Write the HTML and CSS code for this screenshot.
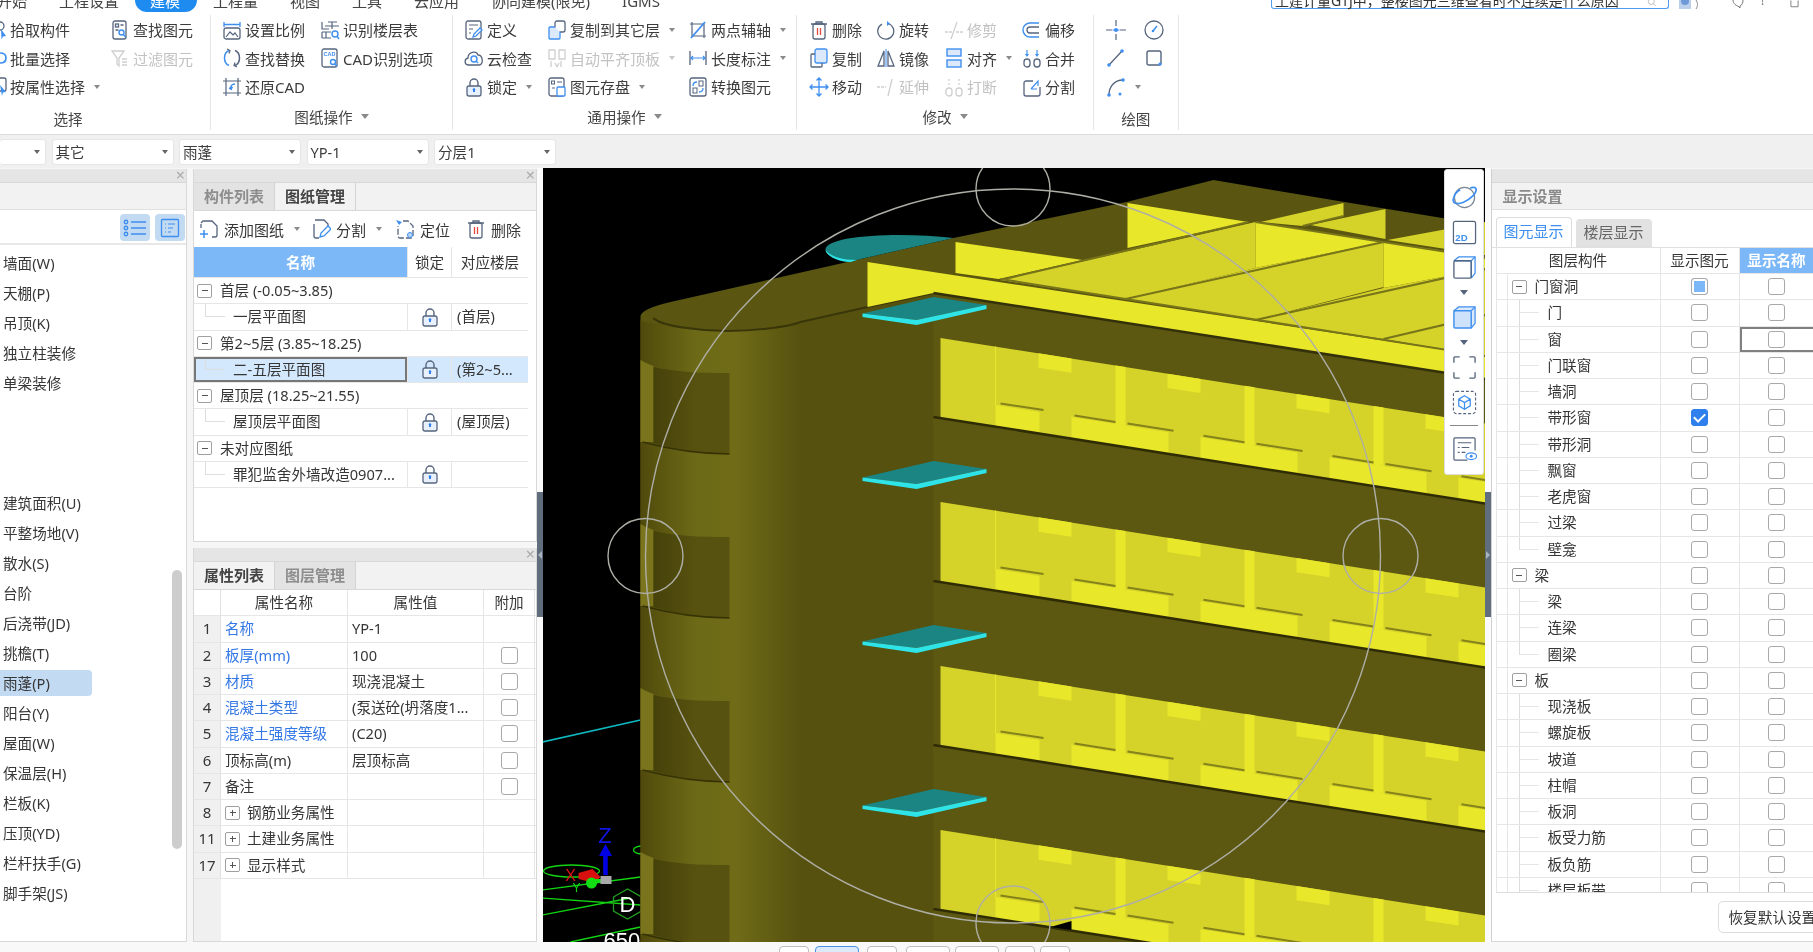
FILE: index.html
```html
<!DOCTYPE html>
<html lang="zh-CN">
<head>
<meta charset="utf-8">
<title>建模</title>
<link rel="stylesheet" href="styles.css">
</head>
<body>
<svg class="sprites" width="0" height="0" aria-hidden="true">
<defs>
<symbol id="i-pick" viewBox="0 0 20 20"><circle cx="13" cy="6" r="4" fill="none" stroke="#56657e" stroke-width="1.3"/><path d="M14 9l5 7-3 .5-1.500 3z" fill="#3f8fef"/></symbol>
<symbol id="i-find" viewBox="0 0 20 20"><g fill="none" stroke="#56657e" stroke-width="1.3"><rect x="3" y="1" width="13" height="18" rx="2"/><rect x="5.500" y="4" width="3" height="3"/><path d="M10.500 5h3M5.500 10h3"/></g><circle cx="11.500" cy="12.500" r="2.500" fill="none" stroke="#3f8fef" stroke-width="1.400"/><path d="M13.500 14.500l2 2.500" stroke="#3f8fef" stroke-width="1.400"/></symbol>
<symbol id="i-batch" viewBox="0 0 20 20"><path d="M13 5c4 0 6 2 6 5s-2 5-6 5" fill="none" stroke="#3f8fef" stroke-width="1.700"/></symbol>
<symbol id="i-filter" viewBox="0 0 20 20"><path d="M2 3h12l-5 7v8l-2-2v-6z" fill="none" stroke="#cfcfcf" stroke-width="1.300"/><path d="M12 11h5M12 14h5M12 17h5" stroke="#cfcfcf" stroke-width="1.300"/></symbol>
<symbol id="i-prop" viewBox="0 0 20 20"><rect x="8" y="1" width="11" height="13" rx="2" fill="none" stroke="#56657e" stroke-width="1.300"/><path d="M13 8l6 7-3 .5L15 19z" fill="#3f8fef"/></symbol>
<symbol id="i-scale" viewBox="0 0 20 20"><path d="M2 2v5M18 2v5M2 4.500h16" stroke="#3f8fef" stroke-width="1.300" fill="none"/><rect x="2" y="8" width="16" height="11" rx="2" fill="none" stroke="#56657e" stroke-width="1.300"/><path d="M4 17l4-5 3 3 2-2 3 4" fill="none" stroke="#56657e" stroke-width="1.200"/></symbol>
<symbol id="i-floor" viewBox="0 0 20 20"><path d="M2 2v7h7M5 6h14M12 2v7M17 2h-9" fill="none" stroke="#56657e" stroke-width="1.200"/><path d="M2 12h9M2 18h9M6 12v6M2 12v6" fill="none" stroke="#56657e" stroke-width="1.200"/><circle cx="15" cy="14" r="3" fill="none" stroke="#3f8fef" stroke-width="1.400"/><path d="M17 16l2 3" stroke="#3f8fef" stroke-width="1.400"/></symbol>
<symbol id="i-replace" viewBox="0 0 20 20"><path d="M7 2.500C1 5 1 15 7 17.500" fill="none" stroke="#3f8fef" stroke-width="1.500"/><path d="M13 2.500c6 2.500 6 12.500 0 15" fill="none" stroke="#56657e" stroke-width="1.500"/><path d="M5 1l3 1.500-1 3M15 19l-3-1.500 1-3" fill="none" stroke="#56657e" stroke-width="1.200"/></symbol>
<symbol id="i-cad" viewBox="0 0 20 20"><rect x="2" y="1" width="15" height="18" rx="2" fill="none" stroke="#56657e" stroke-width="1.300"/><rect x="4" y="3" width="11" height="6" fill="#fff"/><text x="9.500" y="8" font-size="5.500" font-family="Liberation Sans" font-weight="700" text-anchor="middle" fill="#3f8fef">CAD</text><circle cx="13" cy="14" r="2.500" fill="#fff" stroke="#3f8fef" stroke-width="1.400"/><path d="M15 16l2 2.500" stroke="#3f8fef" stroke-width="1.400"/></symbol>
<symbol id="i-restore" viewBox="0 0 20 20"><path d="M1 4h18M1 16h18M4 1v18M16 1v18" stroke="#56657e" stroke-width="1.200" fill="none"/><path d="M13 7c-3 0-5 2-4 5l-2-1M9 12l1.500-2" fill="none" stroke="#3f8fef" stroke-width="1.500"/></symbol>
<symbol id="i-define" viewBox="0 0 20 20"><rect x="2" y="1" width="15" height="18" rx="2" fill="none" stroke="#56657e" stroke-width="1.300"/><path d="M5 5h9M5 9h4M5 13h2" stroke="#56657e" stroke-width="1.200"/><path d="M9 17l1-3 6-6 2 2-6 6z" fill="#fff" stroke="#3f8fef" stroke-width="1.300"/></symbol>
<symbol id="i-cloud" viewBox="0 0 20 20"><path d="M5 17c-5 0-5-6-1-7 0-6 8-8 10-3 5 0 6 10 1 10z" fill="none" stroke="#56657e" stroke-width="1.300"/><circle cx="10" cy="11" r="3" fill="none" stroke="#3f8fef" stroke-width="1.400"/><path d="M12 13l2 2" stroke="#3f8fef" stroke-width="1.400"/></symbol>
<symbol id="i-lock" viewBox="0 0 20 20"><path d="M6 9V6a4 4 0 0 1 8 0v3" fill="none" stroke="#56657e" stroke-width="1.400"/><rect x="3" y="9" width="14" height="10" rx="2" fill="#e8f0fb" stroke="#56657e" stroke-width="1.300"/><rect x="9" y="12" width="2" height="3" fill="#2f80ed"/><circle cx="10" cy="12.500" r="1.300" fill="#2f80ed"/></symbol>
<symbol id="i-copyf" viewBox="0 0 20 20"><rect x="8" y="1" width="10" height="11" rx="2" fill="#fff" stroke="#56657e" stroke-width="1.300"/><path d="M8 7H3a1 1 0 0 0-1 1v10a1 1 0 0 0 1 1h9a1 1 0 0 0 1-1v-6" fill="#dce9fb" stroke="#3f8fef" stroke-width="1.300"/></symbol>
<symbol id="i-top" viewBox="0 0 20 20"><path d="M2 2h6v9H2zM12 2h6v9h-6zM4 13v6M14 13v6M10 19l-2-4M10 19l2-4" fill="none" stroke="#cfcfcf" stroke-width="1.300"/></symbol>
<symbol id="i-save" viewBox="0 0 20 20"><rect x="2" y="1" width="15" height="18" rx="2" fill="none" stroke="#56657e" stroke-width="1.300"/><rect x="4.500" y="4" width="3" height="3" fill="none" stroke="#56657e"/><path d="M10 5h5M5 11h3" stroke="#56657e"/><rect x="10" y="10" width="8" height="9" rx="1" fill="#fff" stroke="#3f8fef" stroke-width="1.300"/></symbol>
<symbol id="i-twopt" viewBox="0 0 20 20"><path d="M4 2v14h14M2 4h14v14" fill="none" stroke="#56657e" stroke-width="1.200"/><path d="M3 18L17 2" stroke="#3f8fef" stroke-width="1.800"/></symbol>
<symbol id="i-len" viewBox="0 0 20 20"><path d="M2 3v14M18 3v14" stroke="#56657e" stroke-width="1.300"/><path d="M3 10h14M5 8l-2 2 2 2M15 8l2 2-2 2" fill="none" stroke="#3f8fef" stroke-width="1.200"/></symbol>
<symbol id="i-conv" viewBox="0 0 20 20"><rect x="2" y="1" width="16" height="18" rx="2" fill="none" stroke="#56657e" stroke-width="1.300"/><rect x="11" y="4" width="4" height="5" fill="none" stroke="#56657e"/><rect x="5" y="11" width="4" height="5" fill="none" stroke="#56657e"/><path d="M5 9c0-3 1-4 4-4M15 11c0 3-1 4-4 4" fill="none" stroke="#3f8fef" stroke-width="1.300"/></symbol>
<symbol id="i-del" viewBox="0 0 20 20"><path d="M2 4h16M7 4V2h6v2" fill="none" stroke="#56657e" stroke-width="1.300"/><rect x="4" y="4" width="12" height="15" rx="2" fill="none" stroke="#56657e" stroke-width="1.300"/><path d="M8.500 8v7M11.500 8v7" stroke="#e04a3f" stroke-width="1.300"/></symbol>
<symbol id="i-rot" viewBox="0 0 20 20"><path d="M12 3.500a8 8 0 1 1-6 .6" fill="none" stroke="#56657e" stroke-width="1.300"/><path d="M11 1l3 2.500-3 2.500z" fill="#3f8fef"/></symbol>
<symbol id="i-trim" viewBox="0 0 20 20"><path d="M1 12h7M12 12h7" stroke="#cfcfcf" stroke-width="1.300" stroke-dasharray="3 1"/><path d="M7 19L13 2" stroke="#cfcfcf" stroke-width="1.300"/></symbol>
<symbol id="i-off" viewBox="0 0 20 20"><path d="M17 3H8a7 7 0 0 0 0 14h9" fill="none" stroke="#3f8fef" stroke-width="1.400"/><path d="M17 7H8a3 3 0 0 0 0 6h9" fill="none" stroke="#56657e" stroke-width="1.300"/></symbol>
<symbol id="i-copy" viewBox="0 0 20 20"><rect x="6" y="1" width="12" height="14" rx="2" fill="#dce9fb" stroke="#3f8fef" stroke-width="1.300"/><path d="M6 6H3a1 1 0 0 0-1 1v11a1 1 0 0 0 1 1h9a1 1 0 0 0 1-1v-3" fill="none" stroke="#56657e" stroke-width="1.300"/></symbol>
<symbol id="i-mir" viewBox="0 0 20 20"><path d="M8 3L2 18h6zM12 3l6 15h-6z" fill="none" stroke="#56657e" stroke-width="1.300"/><path d="M10 1v18" stroke="#3f8fef" stroke-width="1"/></symbol>
<symbol id="i-align" viewBox="0 0 20 20"><rect x="3" y="1" width="14" height="7" fill="#dce9fb" stroke="#3f8fef" stroke-width="1.400"/><rect x="3" y="12" width="14" height="7" fill="#dce9fb" stroke="#3f8fef" stroke-width="1.400"/></symbol>
<symbol id="i-merge" viewBox="0 0 20 20"><rect x="2" y="11" width="6" height="8" rx="3" fill="none" stroke="#56657e" stroke-width="1.300"/><rect x="12" y="11" width="6" height="8" rx="3" fill="none" stroke="#56657e" stroke-width="1.300"/><path d="M5 2v6M15 2v6M3.500 6L5 8l1.500-2M13.500 6L15 8l1.500-2" fill="none" stroke="#3f8fef" stroke-width="1.200"/></symbol>
<symbol id="i-move" viewBox="0 0 20 20"><path d="M10 1v18M1 10h18M7.500 3.500L10 1l2.500 2.500M7.500 16.500L10 19l2.500-2.500M3.500 7.500L1 10l2.500 2.500M16.500 7.500L19 10l-2.500 2.500" fill="none" stroke="#3f8fef" stroke-width="1.300"/></symbol>
<symbol id="i-ext" viewBox="0 0 20 20"><path d="M1 10h9" stroke="#cfcfcf" stroke-width="1.300" stroke-dasharray="3 1"/><path d="M12 19L16 2" stroke="#cfcfcf" stroke-width="1.300"/></symbol>
<symbol id="i-brk" viewBox="0 0 20 20"><rect x="2" y="11" width="6" height="8" rx="3" fill="none" stroke="#cfcfcf" stroke-width="1.300"/><rect x="12" y="11" width="6" height="8" rx="3" fill="none" stroke="#cfcfcf" stroke-width="1.300"/><path d="M5 2v2M5 6v2M15 2v2M15 6v2" stroke="#cfcfcf" stroke-width="1.300"/></symbol>
<symbol id="i-split" viewBox="0 0 20 20"><path d="M11 4H4a2 2 0 0 0-2 2v11a2 2 0 0 0 2 2h12a2 2 0 0 0 2-2v-7" fill="none" stroke="#56657e" stroke-width="1.300"/><path d="M9 12l7-8v5M9 12h6" fill="none" stroke="#3f8fef" stroke-width="1.200"/></symbol>
<symbol id="i-cross" viewBox="0 0 20 20"><path d="M10 0v6M10 14v6M0 10h6M14 10h6" stroke="#56657e" stroke-width="1.200"/><circle cx="10" cy="10" r="2" fill="#3f8fef"/><path d="M6.500 10h7" stroke="#3f8fef" stroke-width="1"/></symbol>
<symbol id="i-clock" viewBox="0 0 20 20"><circle cx="10" cy="10" r="9" fill="none" stroke="#56657e" stroke-width="1.300"/><path d="M9 11l4-5" stroke="#3f8fef" stroke-width="1.500"/><circle cx="9" cy="11" r="1.300" fill="#3f8fef"/></symbol>
<symbol id="i-line" viewBox="0 0 20 20"><path d="M3 17L16 3" stroke="#56657e" stroke-width="1.300"/><circle cx="3" cy="17" r="1.800" fill="#3f8fef"/><circle cx="16" cy="3" r="1.800" fill="#3f8fef"/></symbol>
<symbol id="i-sq" viewBox="0 0 20 20"><rect x="3" y="3" width="14" height="14" rx="2" fill="none" stroke="#56657e" stroke-width="1.400"/><circle cx="16" cy="16" r="1.600" fill="#3f8fef"/></symbol>
<symbol id="i-arc" viewBox="0 0 20 20"><path d="M3 18C3 10 8 3 17 3" fill="none" stroke="#56657e" stroke-width="1.300"/><circle cx="3" cy="18" r="1.800" fill="#3f8fef"/><circle cx="17" cy="3" r="1.800" fill="#3f8fef"/><circle cx="14" cy="17" r="1.500" fill="#3f8fef"/></symbol>
<symbol id="i-add" viewBox="0 0 20 20"><path d="M6 2h7l5 5v9a2 2 0 0 1-2 2h-3M2 9V5M6 2H4l-2 2" fill="none" stroke="#56657e" stroke-width="1.300"/><path d="M5 11v8M1 15h8" stroke="#3f8fef" stroke-width="1.500"/></symbol>
<symbol id="i-msplit" viewBox="0 0 20 20"><path d="M4 1h9l4 4v3M3 5v12a2 2 0 0 0 2 2h3" fill="none" stroke="#56657e" stroke-width="1.300"/><path d="M9 18l1-4 7-7 3 3-7 7z" fill="#fff" stroke="#3f8fef" stroke-width="1.300"/></symbol>
<symbol id="i-loc" viewBox="0 0 20 20"><path d="M8 2h5l5 5v10a2 2 0 0 1-2 2H5a2 2 0 0 1-2-2V7" fill="none" stroke="#56657e" stroke-width="1.300" stroke-dasharray="6 2"/><path d="M1 1l6 2-3 3z" fill="#3f8fef"/><circle cx="15" cy="16" r="2.500" fill="#bcd6f7" stroke="#3f8fef"/></symbol>
<symbol id="i-ls1" viewBox="0 0 24 20"><g fill="none" stroke="#3f8fef" stroke-width="1.400"><circle cx="3" cy="4" r="1.700"/><circle cx="3" cy="10" r="1.700"/><circle cx="3" cy="16" r="1.700"/><path d="M8 4h15M8 10h15M8 16h15"/></g></symbol>
<symbol id="i-ls2" viewBox="0 0 20 20"><rect x="1.500" y="1.500" width="17" height="17" rx="1" fill="none" stroke="#3f8fef" stroke-width="1.300"/><path d="M5 6h1M8 6h7M5 10h1M8 10h5M5 14h1M8 14h3" stroke="#3f8fef" stroke-width="1.200"/></symbol>
</defs>
</svg>

<div class="app">
  <header class="tabs">
    <span class="tab first">开始</span><span class="tab">工程设置</span><span class="tab active">建模</span><span class="tab">工程量</span><span class="tab">视图</span><span class="tab">工具</span><span class="tab">云应用</span><span class="tab">协同建模(限免)</span><span class="tab">IGMS</span>
    <div class="search"><span class="search-text">土建计量GTJ中，整楼图元三维查看时不连续是什么原因</span><svg class="search-ico" viewBox="0 0 12 12"><circle cx="5" cy="2" r="4" fill="none" stroke="#aaa"/><path d="M8 5l3 3" stroke="#aaa"/></svg></div>
    <svg class="avatar" viewBox="0 0 24 9"><rect x="0" y="0" width="12" height="9" fill="#b9cfec"/><circle cx="6" cy="1" r="4" fill="#6d9ad6"/><path d="M17 0c2 3 2 6 0 9" fill="none" stroke="#888"/></svg>
    <svg class="tray tray1" viewBox="0 0 14 9"><path d="M2 0c0 4 4 6 5 6l2 2V6c2-1 3-3 3-6" fill="none" stroke="#777"/></svg>
    <span class="tray-mark">!</span>
    <svg class="tray tray3" viewBox="0 0 10 9"><path d="M1 0v7h8V0" fill="none" stroke="#777"/></svg>
  </header>

  <nav class="ribbon">
    <section class="group g1">
      <div class="grid c1">
        <div class="it"><svg class="ic"><use href="#i-pick"/></svg>拾取构件</div>
        <div class="it"><svg class="ic"><use href="#i-batch"/></svg>批量选择</div>
        <div class="it"><svg class="ic"><use href="#i-prop"/></svg>按属性选择<i class="car"></i></div>
        <div class="it"><svg class="ic"><use href="#i-find"/></svg>查找图元</div>
        <div class="it off"><svg class="ic"><use href="#i-filter"/></svg>过滤图元</div>
      </div>
      <div class="glabel low">选择</div>
    </section>
    <section class="group g2">
      <div class="grid c2">
        <div class="it"><svg class="ic"><use href="#i-scale"/></svg>设置比例</div>
        <div class="it"><svg class="ic"><use href="#i-replace"/></svg>查找替换</div>
        <div class="it"><svg class="ic"><use href="#i-restore"/></svg>还原CAD</div>
        <div class="it"><svg class="ic"><use href="#i-floor"/></svg>识别楼层表</div>
        <div class="it"><svg class="ic"><use href="#i-cad"/></svg>CAD识别选项</div>
      </div>
      <div class="glabel">图纸操作<i class="car big"></i></div>
    </section>
    <section class="group g3">
      <div class="grid c3">
        <div class="it"><svg class="ic"><use href="#i-define"/></svg>定义</div>
        <div class="it"><svg class="ic"><use href="#i-cloud"/></svg>云检查</div>
        <div class="it"><svg class="ic"><use href="#i-lock"/></svg>锁定<i class="car"></i></div>
        <div class="it"><svg class="ic"><use href="#i-copyf"/></svg>复制到其它层<i class="car"></i></div>
        <div class="it off"><svg class="ic"><use href="#i-top"/></svg>自动平齐顶板<i class="car"></i></div>
        <div class="it"><svg class="ic"><use href="#i-save"/></svg>图元存盘<i class="car"></i></div>
        <div class="it"><svg class="ic"><use href="#i-twopt"/></svg>两点辅轴<i class="car"></i></div>
        <div class="it"><svg class="ic"><use href="#i-len"/></svg>长度标注<i class="car"></i></div>
        <div class="it"><svg class="ic"><use href="#i-conv"/></svg>转换图元</div>
      </div>
      <div class="glabel">通用操作<i class="car big"></i></div>
    </section>
    <section class="group g4">
      <div class="grid c4">
        <div class="it"><svg class="ic"><use href="#i-del"/></svg>删除</div>
        <div class="it"><svg class="ic"><use href="#i-copy"/></svg>复制</div>
        <div class="it"><svg class="ic"><use href="#i-move"/></svg>移动</div>
        <div class="it"><svg class="ic"><use href="#i-rot"/></svg>旋转</div>
        <div class="it"><svg class="ic"><use href="#i-mir"/></svg>镜像</div>
        <div class="it off"><svg class="ic"><use href="#i-ext"/></svg>延伸</div>
        <div class="it off"><svg class="ic"><use href="#i-trim"/></svg>修剪</div>
        <div class="it"><svg class="ic"><use href="#i-align"/></svg>对齐<i class="car"></i></div>
        <div class="it off"><svg class="ic"><use href="#i-brk"/></svg>打断</div>
        <div class="it"><svg class="ic"><use href="#i-off"/></svg>偏移</div>
        <div class="it"><svg class="ic"><use href="#i-merge"/></svg>合并</div>
        <div class="it"><svg class="ic"><use href="#i-split"/></svg>分割</div>
      </div>
      <div class="glabel">修改<i class="car big"></i></div>
    </section>
    <section class="group g5">
      <div class="grid c5">
        <div class="it"><svg class="ic"><use href="#i-cross"/></svg></div>
        <div class="it"><svg class="ic"><use href="#i-line"/></svg></div>
        <div class="it"><svg class="ic"><use href="#i-arc"/></svg><i class="car"></i></div>
        <div class="it"><svg class="ic"><use href="#i-clock"/></svg></div>
        <div class="it"><svg class="ic"><use href="#i-sq"/></svg></div>
      </div>
      <div class="glabel low">绘图</div>
    </section>
  </nav>

  <div class="selects">
    <div class="sel s0"></div>
    <div class="sel">其它</div>
    <div class="sel">雨蓬</div>
    <div class="sel">YP-1</div>
    <div class="sel">分层1</div>
  </div>

  <main class="main">
    <aside class="left">
      <div class="phead"><span class="x">×</span></div>
      <div class="lsub"></div>
      <div class="lbtns">
        <span class="lbtn"><svg class="ic-ls"><use href="#i-ls1"/></svg></span>
        <span class="lbtn"><svg class="ic-ls2"><use href="#i-ls2"/></svg></span>
      </div>
      <div class="lbody">
        <ul class="list">
          <li>墙面(W)</li><li>天棚(P)</li><li>吊顶(K)</li><li>独立柱装修</li><li>单梁装修</li>
          <li class="spacer"></li>
          <li>建筑面积(U)</li><li>平整场地(V)</li><li>散水(S)</li><li>台阶</li><li>后浇带(JD)</li><li>挑檐(T)</li>
          <li class="sel-row">雨蓬(P)</li>
          <li>阳台(Y)</li><li>屋面(W)</li><li>保温层(H)</li><li>栏板(K)</li><li>压顶(YD)</li><li>栏杆扶手(G)</li><li>脚手架(JS)</li>
        </ul>
        <div class="thumb"></div>
      </div>
    </aside>

    <div class="mid">
      <section class="mpanel drawings">
        <div class="phead"><span class="x">×</span></div>
        <div class="ptabs"><span class="ptab dim">构件列表</span><span class="ptab cur">图纸管理</span></div>
        <div class="mtools">
          <div class="mt"><svg class="ic"><use href="#i-add"/></svg>添加图纸<i class="car"></i></div>
          <div class="mt"><svg class="ic"><use href="#i-msplit"/></svg>分割<i class="car"></i></div>
          <div class="mt"><svg class="ic"><use href="#i-loc"/></svg>定位</div>
          <div class="mt"><svg class="ic"><use href="#i-del"/></svg>删除</div>
        </div>
        <div class="dtable">
          <div class="drow head"><div class="hname">名称</div><div class="hc">锁定</div><div class="hc">对应楼层</div></div>
          <div class="drow par"><span class="mini"></span>首层 (-0.05~3.85)</div>
          <div class="drow"><div class="kid">一层平面图</div><div class="lk"><svg class="ic-lock"><use href="#i-lock"/></svg></div><div class="fl">(首层)</div></div>
          <div class="drow par"><span class="mini"></span>第2~5层 (3.85~18.25)</div>
          <div class="drow picked"><div class="kid focus">二-五层平面图</div><div class="lk"><svg class="ic-lock"><use href="#i-lock"/></svg></div><div class="fl">(第2~5...</div></div>
          <div class="drow par"><span class="mini"></span>屋顶层 (18.25~21.55)</div>
          <div class="drow"><div class="kid">屋顶层平面图</div><div class="lk"><svg class="ic-lock"><use href="#i-lock"/></svg></div><div class="fl">(屋顶层)</div></div>
          <div class="drow par"><span class="mini"></span>未对应图纸</div>
          <div class="drow"><div class="kid">罪犯监舍外墙改造0907...</div><div class="lk"><svg class="ic-lock"><use href="#i-lock"/></svg></div><div class="fl"></div></div>
        </div>
      </section>

      <section class="mpanel props">
        <div class="phead"><span class="x">×</span></div>
        <div class="ptabs"><span class="ptab cur">属性列表</span><span class="ptab dim">图层管理</span></div>
        <div class="ptable">
          <div class="prow head"><div class="idx"></div><div class="c">属性名称</div><div class="c">属性值</div><div class="c">附加</div></div>
          <div class="prow"><div class="idx">1</div><div class="nm blue">名称</div><div class="val">YP-1</div><div class="add"></div></div>
          <div class="prow"><div class="idx">2</div><div class="nm blue">板厚(mm)</div><div class="val">100</div><div class="add"><span class="cb"></span></div></div>
          <div class="prow"><div class="idx">3</div><div class="nm blue">材质</div><div class="val">现浇混凝土</div><div class="add"><span class="cb"></span></div></div>
          <div class="prow"><div class="idx">4</div><div class="nm blue">混凝土类型</div><div class="val">(泵送砼(坍落度1...</div><div class="add"><span class="cb"></span></div></div>
          <div class="prow"><div class="idx">5</div><div class="nm blue">混凝土强度等级</div><div class="val">(C20)</div><div class="add"><span class="cb"></span></div></div>
          <div class="prow"><div class="idx">6</div><div class="nm">顶标高(m)</div><div class="val">层顶标高</div><div class="add"><span class="cb"></span></div></div>
          <div class="prow"><div class="idx">7</div><div class="nm">备注</div><div class="val"></div><div class="add"><span class="cb"></span></div></div>
          <div class="prow"><div class="idx">8</div><div class="nm"><span class="mini plus"></span>钢筋业务属性</div><div class="val"></div><div class="add"></div></div>
          <div class="prow"><div class="idx">11</div><div class="nm"><span class="mini plus"></span>土建业务属性</div><div class="val"></div><div class="add"></div></div>
          <div class="prow"><div class="idx">17</div><div class="nm"><span class="mini plus"></span>显示样式</div><div class="val"></div><div class="add"></div></div>
        </div>
      </section>
    </div>

    <div class="split"><span class="handle"><i class="tri tl"></i></span></div>

    <div class="viewport">
      <svg class="scene" viewBox="542.5 168 942.500 774" width="942.500" height="774">
        <defs>
          <linearGradient id="curve" gradientUnits="userSpaceOnUse" x1="640" x2="800" y1="0" y2="0">
            <stop offset="0" stop-color="#4f4a0c"/><stop offset=".12" stop-color="#5a550f"/><stop offset=".35" stop-color="#6d6a17"/><stop offset=".6" stop-color="#6f6b17"/><stop offset=".8" stop-color="#625e13"/><stop offset="1" stop-color="#56510f"/>
          </linearGradient>
          <linearGradient id="recess" gradientUnits="userSpaceOnUse" x1="653" x2="695" y1="0" y2="0">
            <stop offset="0" stop-color="#45410a"/><stop offset="1" stop-color="#57520f"/>
          </linearGradient>
          <g id="win">
            <path d="M640 360C645 363 650 365 653 366L653 442 640 442Z" fill="#7a741c"/>
            <path d="M653 367C675 372 700 373 729 373L729 454C700 453 672 449 653 443Z" fill="url(#recess)"/>
            <path d="M642 442C672 450 700 454 729 454" fill="none" stroke="#363205" stroke-width="1.500"/>
          </g>
          <g id="plate">
            <path d="M862 313.500L933 297 986 305 916 320Z" fill="#1b8583"/>
            <path d="M862 313.500L916 320 986 305 986 309 916 325 862 317Z" fill="#2fe4e8"/>
          </g>
          <g id="bay">
            <polygon points="1167,373.700 1200,378.900 1200,393 1167,387.900" fill="#e9e72a"/>
            <polygon points="1115,365.500 1125,367 1125,425.500 1115,423.900" fill="#e9e72a"/>
            <polygon points="1071,417 1168,432.200 1168,453.800 1071,438.600" fill="#e9e72a"/>
            <path d="M1074 415.500L1115 422M1127 423.500L1173 430.700" stroke="#85821a" stroke-width="2"/>
          </g>
          <g id="floor">
            <polygon points="940,338 1485,423.600 1485,503.600 940,418" fill="#d5d32a"/>
            <polygon points="1038,353.300 1071,358.600 1071,372.800 1038,367.700" fill="#e9e72a"/>
            <polygon points="995,405 1039,412 1039,433.600 995,426.700" fill="#e9e72a"/>
            <path d="M995 346.500V405" stroke="#e9e72a" stroke-width="1"/>
            <path d="M1000 403.500L1043 410" stroke="#85821a" stroke-width="2"/>
            <use href="#bay"/>
            <use href="#bay" x="129" y="20.250"/>
            <use href="#bay" x="258" y="40.500"/>
            <use href="#bay" x="387" y="60.750"/>
            <path d="M933 417L1485 503.600" stroke="#2f2c05" stroke-width="2.500"/>
          </g>
        </defs>
        <rect x="542.500" y="168" width="942.500" height="774" fill="#000"/>
        <path d="M542 742L640 720" stroke="#0fb9bf" stroke-width="1.500"/>
        <g fill="none" stroke="#13d613" stroke-width="1.300">
          <ellipse cx="571" cy="871" rx="28" ry="6"/>
          <ellipse cx="642" cy="850" rx="9" ry="4"/>
          <path d="M542 890L640 877M542 898L640 905M542 915L630 898M570 942L640 927"/>
          <path d="M613 897L627 889 641 897V911L627 919 613 911Z" stroke="#1f9e1f"/>
        </g>
        <path d="M578 873l14-4 8 8-6 6-16-4z" fill="#d81010"/>
        <circle cx="591" cy="883" r="5.500" fill="#12e012"/>
        <path d="M595 881h6" stroke="#12e012" stroke-width="4"/>
        <rect x="600" y="876" width="11" height="8" fill="#a9a9a9"/>
        <path d="M605 875v-20" stroke="#0000e6" stroke-width="4.500"/>
        <path d="M605 844l-6.500 12h13z" fill="#0000e6"/>
        <text class="g-z" x="604.500" y="843">Z</text>
        <text class="g-x" x="570" y="881">X</text>
        <text class="g-y" x="576" y="892">Y</text>
        <text class="g-d" x="627" y="912">D</text>
        <text class="g-n" x="603" y="948">650</text>

        <path d="M640 942V316C641 311 650 307 670 302L953 238 1126 202 1213 180 1344 202 1485 225V942Z" fill="#5a5510"/>
        <polygon points="800,322 867,307 933,293 933,942 800,942" fill="#56510f"/>
        <polygon points="933,293 1485,379 1485,942 933,942" fill="#5c5812"/>
        <path d="M640 320C650 325 690 331 727 331 760 331 790 326 800 322V942H640Z" fill="url(#curve)"/>
        <path d="M653 318C660 326 700 331 727 331 760 331 790 326 800 322L867 307 933 293" fill="none" stroke="#3a360a" stroke-width="2"/>

        <use href="#win"/><use href="#win" y="164"/><use href="#win" y="328"/><use href="#win" y="492"/>

        <path d="M953 238C900 232 825 235 825 250 826 256 838 261 850 262L860 259Z" fill="#1b8583"/>
        <path d="M825 250C826 256 838 262 850 262L856 260C840 260 830 256 825 250Z" fill="#2fe4e8"/>

        <polygon points="955,242 1082,260 998,279 955,273" fill="#e9e72a"/>
        <polygon points="867,262 1485,356 1485,379 933,293 867,307" fill="#e9e72a"/>
        <polygon points="1000,280 1255,222 1255,268 1125,299" fill="#d5d32a"/>
        <polygon points="1127,203 1248,222 1127,248" fill="#e9e72a"/>
        <polygon points="1255,222 1383,242 1255,268" fill="#e9e72a"/>
        <polygon points="1125,299 1255,268 1383,242 1383,287 1255,320" fill="#d5d32a"/>
        <polygon points="1383,242 1485,257 1485,269 1383,288" fill="#e9e72a"/>
        <polygon points="1255,320 1383,288 1485,269 1485,315 1383,339" fill="#d5d32a"/>
        <polygon points="1383,339 1485,315 1485,356" fill="#d5d32a"/>
        <polygon points="1260,222 1343,203 1343,216 1302,226" fill="#d5d32a"/>
        <polygon points="1310,225 1385,209 1385,239" fill="#d5d32a"/>
        <polygon points="1387,240 1485,222 1485,255" fill="#d5d32a"/>
        <g stroke="#77741a" stroke-width="2" fill="none">
          <path d="M1000 280L1248 222M1125 299L1383 242M1255 320L1485 269M1383 339L1485 315M1302 226L1343 216"/>
          <path d="M1255 222L1485 258M1000 279L1485 356"/>
        </g>
        <path d="M933 293L1485 379" stroke="#33300a" stroke-width="2.500"/>

        <use href="#floor"/><use href="#floor" y="164"/><use href="#floor" y="328"/><use href="#floor" y="492"/>
        <polygon points="1050,927 1071,921 1071,930" fill="#000"/>

        <use href="#plate"/><use href="#plate" y="164"/><use href="#plate" y="328"/><use href="#plate" y="492"/>

        <g fill="none" stroke="#aeaea6" stroke-width="1.400">
          <ellipse cx="1012.500" cy="556" rx="367.500" ry="367"/>
          <circle cx="1012.500" cy="189" r="37"/>
          <circle cx="645" cy="556" r="37.500"/>
          <circle cx="1380" cy="556" r="37.500"/>
          <circle cx="1012.500" cy="923" r="37"/>
        </g>
      </svg>
      <div class="vtool">
        <svg class="vi" viewBox="0 0 26 26"><circle cx="13" cy="13" r="10.500" fill="none" stroke="#7b8797" stroke-width="1.300"/><path d="M1.500 14C0 19 5 21 12 18 18 15.500 26 9 25 4 24.500 2.500 22 2 19 3" fill="none" stroke="#3f8fef" stroke-width="1.800"/><path d="M1.500 14c1-4 3-7 7-9" fill="none" stroke="#3f8fef" stroke-width="1.800"/></svg>
        <svg class="vi" viewBox="0 0 26 26"><rect x="1.500" y="1.500" width="23" height="23" rx="2" fill="none" stroke="#56657e" stroke-width="1.300"/><text class="t2d" x="3.500" y="22">2D</text></svg>
        <svg class="vi" viewBox="0 0 26 26"><path d="M2 6l5-4h17v17l-4 5" fill="none" stroke="#3f8fef" stroke-width="1.300"/><path d="M2 6h18l4-4M20 6v18" fill="none" stroke="#3f8fef" stroke-width="1.300"/><rect x="2" y="6" width="18" height="18" rx="1.500" fill="none" stroke="#56657e" stroke-width="1.400"/></svg>
        <i class="vcar"></i>
        <svg class="vi" viewBox="0 0 26 26"><path d="M2 6l5-4h17v17l-4 5z" fill="#dbe9fb" stroke="#3f8fef" stroke-width="1.300"/><rect x="2" y="6" width="18" height="18" rx="1.500" fill="#cfe2fb" stroke="#3f8fef" stroke-width="1.500"/><path d="M20 6l4-4" stroke="#3f8fef" stroke-width="1.300"/></svg>
        <i class="vcar"></i>
        <svg class="vi" viewBox="0 0 26 26"><path d="M2 8V3a1 1 0 0 1 1-1h5M18 2h5a1 1 0 0 1 1 1v5M24 18v5a1 1 0 0 1-1 1h-5M8 24H3a1 1 0 0 1-1-1v-5" fill="none" stroke="#56657e" stroke-width="1.400"/></svg>
        <svg class="vi" viewBox="0 0 26 26"><rect x="1.500" y="1.500" width="23" height="23" rx="3" fill="none" stroke="#56657e" stroke-width="1.200" stroke-dasharray="3 2"/><path d="M13 6l6 3.500v7L13 20l-6-3.500v-7zM7 9.500l6 3.500 6-3.500M13 13v7" fill="none" stroke="#3f8fef" stroke-width="1.300"/></svg>
        <span class="vsep"></span>
        <svg class="vi" viewBox="0 0 26 26"><path d="M24 15V3a1 1 0 0 0-1-1H3a1 1 0 0 0-1 1v21a1 1 0 0 0 1 1h13" fill="none" stroke="#56657e" stroke-width="1.300"/><path d="M6 7h14M6 12h2M10 12h8M6 17h2M10 17h4" stroke="#56657e" stroke-width="1.200"/><ellipse cx="20" cy="21" rx="5.500" ry="3.500" fill="#fff" stroke="#3f8fef" stroke-width="1.200"/><circle cx="20" cy="21" r="1.500" fill="#3f8fef"/></svg>
      </div>
    </div>

    <div class="split"><span class="handle"><i class="tri tr"></i></span></div>

    <aside class="right">
      <div class="phead"></div>
      <div class="rsub">显示设置</div>
      <div class="rtabs"><span class="rtab cur">图元显示</span><span class="rtab">楼层显示</span></div>
      <div class="rtable">
        <div class="rrow rh"><div class="rn">图层构件</div><div class="rc">显示图元</div><div class="rc hi">显示名称</div></div>
        <div class="rrow"><div class="rn par"><span class="mini"></span>门窗洞</div><div class="rc"><span class="cb half"></span></div><div class="rc"><span class="cb"></span></div></div>
        <div class="rrow"><div class="rn kid">门</div><div class="rc"><span class="cb"></span></div><div class="rc"><span class="cb"></span></div></div>
        <div class="rrow"><div class="rn kid">窗</div><div class="rc"><span class="cb"></span></div><div class="rc focus"><span class="cb"></span></div></div>
        <div class="rrow"><div class="rn kid">门联窗</div><div class="rc"><span class="cb"></span></div><div class="rc"><span class="cb"></span></div></div>
        <div class="rrow"><div class="rn kid">墙洞</div><div class="rc"><span class="cb"></span></div><div class="rc"><span class="cb"></span></div></div>
        <div class="rrow"><div class="rn kid">带形窗</div><div class="rc"><span class="cb on"></span></div><div class="rc"><span class="cb"></span></div></div>
        <div class="rrow"><div class="rn kid">带形洞</div><div class="rc"><span class="cb"></span></div><div class="rc"><span class="cb"></span></div></div>
        <div class="rrow"><div class="rn kid">飘窗</div><div class="rc"><span class="cb"></span></div><div class="rc"><span class="cb"></span></div></div>
        <div class="rrow"><div class="rn kid">老虎窗</div><div class="rc"><span class="cb"></span></div><div class="rc"><span class="cb"></span></div></div>
        <div class="rrow"><div class="rn kid">过梁</div><div class="rc"><span class="cb"></span></div><div class="rc"><span class="cb"></span></div></div>
        <div class="rrow"><div class="rn kid end">壁龛</div><div class="rc"><span class="cb"></span></div><div class="rc"><span class="cb"></span></div></div>
        <div class="rrow"><div class="rn par"><span class="mini"></span>梁</div><div class="rc"><span class="cb"></span></div><div class="rc"><span class="cb"></span></div></div>
        <div class="rrow"><div class="rn kid">梁</div><div class="rc"><span class="cb"></span></div><div class="rc"><span class="cb"></span></div></div>
        <div class="rrow"><div class="rn kid">连梁</div><div class="rc"><span class="cb"></span></div><div class="rc"><span class="cb"></span></div></div>
        <div class="rrow"><div class="rn kid end">圈梁</div><div class="rc"><span class="cb"></span></div><div class="rc"><span class="cb"></span></div></div>
        <div class="rrow"><div class="rn par"><span class="mini"></span>板</div><div class="rc"><span class="cb"></span></div><div class="rc"><span class="cb"></span></div></div>
        <div class="rrow"><div class="rn kid">现浇板</div><div class="rc"><span class="cb"></span></div><div class="rc"><span class="cb"></span></div></div>
        <div class="rrow"><div class="rn kid">螺旋板</div><div class="rc"><span class="cb"></span></div><div class="rc"><span class="cb"></span></div></div>
        <div class="rrow"><div class="rn kid">坡道</div><div class="rc"><span class="cb"></span></div><div class="rc"><span class="cb"></span></div></div>
        <div class="rrow"><div class="rn kid">柱帽</div><div class="rc"><span class="cb"></span></div><div class="rc"><span class="cb"></span></div></div>
        <div class="rrow"><div class="rn kid">板洞</div><div class="rc"><span class="cb"></span></div><div class="rc"><span class="cb"></span></div></div>
        <div class="rrow"><div class="rn kid">板受力筋</div><div class="rc"><span class="cb"></span></div><div class="rc"><span class="cb"></span></div></div>
        <div class="rrow"><div class="rn kid">板负筋</div><div class="rc"><span class="cb"></span></div><div class="rc"><span class="cb"></span></div></div>
        <div class="rrow"><div class="rn kid">楼层板带</div><div class="rc"><span class="cb"></span></div><div class="rc"><span class="cb"></span></div></div>
      </div>
      <div class="rfoot"><span class="reset">恢复默认设置</span></div>
    </aside>
  </main>

  <footer class="bottom">
    <span class="bb"></span><span class="bb w act"></span><span class="bb m"></span><span class="bb w"></span><span class="bb w"></span><span class="bb"></span><span class="bb"></span>
  </footer>
</div>
</body>
</html>
```

FILE: styles.css
```css
* { box-sizing: border-box; }
html, body { margin: 0; height: 100%; overflow: hidden; background: #f8f8f8; }
body {
  width: 1813px;
  height: 952px;
  font-family: "Noto Sans", "Noto Sans CJK SC", sans-serif;
  font-size: 14.6px;
  color: #363636;
}
.sprites { position: absolute; }
.app { width: 1813px; height: 952px; overflow: hidden; filter: blur(.4px); }

/* top tabs */
.tabs { display: flex; height: 12px; overflow: hidden; background: #fff; font-size: 15px; line-height: 2px; margin-left: -19px; width: 1832px; }
.tab { padding: 0 16px; height: 12px; white-space: nowrap; color: #444; }
.tab.active { background: #1e8bf0; color: #fff; border-radius: 0 0 14px 14px; width: 62px; padding: 0 15px; margin: 0; }
.search { margin-left: auto; width: 398px; height: 9px; border: 1px solid #4d9cf0; border-top: 0; border-radius: 0 0 3px 3px; display: flex; justify-content: space-between; padding: 0 10px 0 3px; font-size: 14px; color: #333; margin-right: 10px; }
.search-ico { width: 12px; height: 9px; }
.avatar { width: 24px; height: 9px; margin-right: 28px; }
.tray { height: 9px; }
.tray1 { width: 14px; margin-right: 16px; }
.tray-mark { width: 6px; font-size: 12px; color: #777; margin-right: 23px; }
.tray3 { width: 9px; margin-right: 14px; }

/* ribbon */
.ribbon { display: flex; height: 123px; margin-left: -74px; width: 1887px; background: #fff; border-bottom: 1px solid #dcdcdc; font-size: 15px; white-space: nowrap; }
.group { height: 115px; margin-top: 3px; border-right: 1px solid #e6e6e6; padding-top: .5px; }
.g1 { width: 285px; padding-left: 61px; }
.g2 { width: 242px; padding-left: 11px; }
.g3 { width: 344px; padding-left: 11px; }
.g4 { width: 297px; padding-left: 12px; }
.g5 { width: 84.500px; padding-left: 12px; }
.grid { display: grid; grid-auto-flow: column; grid-template-rows: repeat(3, 28.500px); }
.c1 { grid-template-columns: 123px 100px; }
.c2 { grid-template-columns: 98px 120px; }
.c3 { grid-template-columns: 83px 141px 100px; }
.c4 { grid-template-columns: 67px 68px 78px 60px; }
.c5 { grid-template-columns: 38px 30px; }
.it { display: flex; align-items: center; gap: 3px; color: #3c3c3c; }
.it.off { color: #c2c2c2; }
.ic { width: 20px; height: 20px; flex: none; }
.car { display: inline-block; width: 0; height: 0; border-left: 3px solid transparent; border-right: 3px solid transparent; border-top: 4px solid #8a8a8a; margin-left: 6px; }
.car.big { border-left-width: 4px; border-right-width: 4px; border-top-width: 5px; margin-left: 8px; }
.off .car { border-top-color: #c8c8c8; }
.glabel { height: 27px; margin-top: 2px; text-align: center; color: #444; font-size: 14.600px; display: flex; align-items: center; justify-content: center; }
.glabel.low { padding-top: 3px; }
.g1 .glabel { margin-left: -61px; }
.g2 .glabel, .g3 .glabel { margin-left: -11px; }
.g4 .glabel, .g5 .glabel { margin-left: -12px; }

/* selector row */
.selects { display: flex; gap: 5.500px; height: 33px; padding-top: 4px; background: #f0f0f0; }
.sel { width: 122px; height: 26px; background: #fff; border: 1px solid #e6e6e6; border-radius: 3px; line-height: 24px; padding-left: 3px; color: #3c3c3c; display: flex; justify-content: space-between; align-items: center; padding-right: 5px; }
.sel::after { content: ""; border-left: 3px solid transparent; border-right: 3px solid transparent; border-top: 4px solid #666; }
.s0 { width: 46px; border-left: 0; justify-content: flex-end; }

/* main */
.main { display: flex; height: 774px; background: #f6f6f6; }
.phead { height: 14px; flex: none; background: #e5e5e5; border-bottom: 1px solid #d8d8d8; display: flex; justify-content: flex-end; padding-right: 1px; }
.x { font-size: 16px; line-height: 13px; color: #aaa; }

/* left */
.left { width: 187px; margin: 1px 6px 0 0; display: flex; flex-direction: column; background: #fff; border-right: 1px solid #d8d8d8; border-bottom: 1px solid #d8d8d8; }
.lsub { height: 27px; background: #f2f2f2; border-bottom: 1px solid #e0e0e0; flex: none; }
.lbtns { height: 35px; flex: none; display: flex; justify-content: flex-end; gap: 5px; padding: 4px 1px 0 0; border-bottom: 2px solid #e8e8e8; }
.lbtn { width: 30px; height: 27px; background: #c2daf2; border-radius: 4px; display: flex; align-items: center; justify-content: center; }
.ic-ls { width: 24px; height: 20px; }
.ic-ls2 { width: 20px; height: 20px; }
.lbody { flex: 1; display: flex; justify-content: space-between; padding-right: 4px; min-height: 0; }
.list { list-style: none; margin: 0; padding: 3px 0 0; width: 92px; white-space: nowrap; }
.list li { height: 30px; line-height: 30px; padding-left: 3px; }
.list .spacer { height: 90px; }
.list .sel-row { height: 26px; line-height: 26px; margin: 2px 0; background: #c2daf2; border-radius: 0 4px 4px 0; }
.thumb { width: 10px; height: 279px; margin-top: 325px; background: #cdcdcd; border-radius: 5px; }

/* middle */
.mid { width: 344px; display: flex; flex-direction: column; gap: 6px; margin-top: 1px; }
.mpanel { display: flex; flex-direction: column; background: #fff; border: 1px solid #d8d8d8; border-top: 0; overflow: hidden; }
.drawings { height: 373px; }
.props { height: 394px; }
.ptabs { height: 28px; flex: none; display: flex; background: #f2f2f2; border-bottom: 1px solid #d8d8d8; }
.ptab { width: 81px; text-align: center; line-height: 27px; font-size: 15px; font-weight: 700; border-right: 1px solid #d4d4d4; }
.ptab.cur { background: #f2f2f2; color: #444; }
.ptab.dim { background: #e3e3e3; color: #8d8d8d; }
.mtools { height: 36px; flex: none; display: grid; grid-template-columns: 112px 84px 71px auto; padding-left: 5px; font-size: 15px; }
.mt { display: flex; align-items: center; gap: 5px; white-space: nowrap; }
.mt .car { margin-left: 5px; }
.dtable { width: 334px; }
.drow { display: grid; grid-template-columns: 213px 44px 1fr; height: 26.250px; border-bottom: 1px solid #e6e6e6; line-height: 25px; white-space: nowrap; }
.drow.head { height: 31px; line-height: 30px; }
.hname { background: #7cb8f8; color: #fff; text-align: center; font-weight: 700; }
.hc { text-align: center; border-left: 1px solid #e6e6e6; }
.drow.par { display: flex; align-items: center; padding-left: 3px; }
.mini { display: inline-flex; flex: none; width: 15px; height: 14px; border: 1px solid #a0a0a0; border-radius: 2px; margin-right: 8px; align-items: center; justify-content: center; background: #fff; }
.mini::before { content: ""; width: 6px; height: 1px; background: #555; }
.mini.plus { position: relative; }
.mini.plus::after { content: ""; position: absolute; width: 1px; height: 6px; background: #555; left: 6px; top: 3px; }
.drow .kid { padding-left: 39px; background: linear-gradient(#ddd, #ddd) 11px 0 / 1px 50% no-repeat, linear-gradient(#ddd, #ddd) 11px 50% / 20px 1px no-repeat; overflow: hidden; }
.lk { border-left: 1px solid #e6e6e6; display: flex; align-items: center; justify-content: center; }
.ic-lock { width: 20px; height: 20px; }
.fl { border-left: 1px solid #e6e6e6; padding-left: 5px; }
.picked { background: #d3e8fd; }
.kid.focus { outline: 2px solid #777; outline-offset: -2px; }

.ptable { flex: 1; background: linear-gradient(#f0f0f0, #f0f0f0) 0 0 / 27px 100% no-repeat; }
.prow { display: grid; grid-template-columns: 27px 127px 136px 51px; height: 26.250px; border-bottom: 1px solid #e6e6e6; line-height: 25px; white-space: nowrap; }
.prow.head { background: #fff; }
.idx { background: #f0f0f0; text-align: center; border-right: 1px solid #e0e0e0; font-size: 15px; }
.prow.head .idx { background: #fff; }
.c { text-align: center; border-right: 1px solid #e6e6e6; }
.nm { padding-left: 4px; border-right: 1px solid #e6e6e6; display: flex; align-items: center; }
.nm .mini { margin-left: 0; margin-right: 7px; }
.blue { color: #3478e5; }
.val { padding-left: 4px; border-right: 1px solid #e6e6e6; }
.add { display: flex; align-items: center; justify-content: center; border-right: 1px solid #e6e6e6; }
.cb { display: inline-block; width: 17px; height: 17px; border: 1.500px solid #a9a9a9; border-radius: 3px; background: #fff; flex: none; }
.cb.half { background: #7cb8f8; box-shadow: inset 0 0 0 2px #fff; }
.cb.on { background: #2f80ed; border-color: #2f80ed; position: relative; }
.cb.on::after { content: ""; position: absolute; left: 4px; top: 1px; width: 5px; height: 9px; border: solid #fff; border-width: 0 2px 2px 0; transform: rotate(45deg); }

/* splitters */
.split { width: 5.500px; flex: none; display: flex; align-items: center; background: #fbfbfb; }
.handle { display: flex; align-items: center; justify-content: center; width: 100%; height: 125px; background: #5f6d7c; margin-top: -1px; }
.tri { width: 0; height: 0; border-top: 4px solid transparent; border-bottom: 4px solid transparent; }
.tl { border-right: 4px solid #aab3bd; }
.tr { border-left: 4px solid #aab3bd; }

/* 3D view */
.viewport { width: 942.500px; flex: none; position: relative; height: 774px; overflow: hidden; }
.scene { display: block; }
.g-z { font: 22px "Liberation Sans", sans-serif; fill: #1414e6; text-anchor: middle; }
.g-x { font: 16px "Liberation Sans", sans-serif; fill: #e01010; text-anchor: middle; }
.g-y { font: 12px "Liberation Sans", sans-serif; fill: #12e012; text-anchor: middle; }
.g-d { font: 22px "Liberation Sans", sans-serif; fill: #fff; text-anchor: middle; }
.g-n { font: 22px "Liberation Sans", sans-serif; fill: #fff; }
.vtool { position: absolute; top: 1px; right: 1px; width: 40px; height: 306px; background: #fff; border: 1px solid #ddd; border-radius: 3px; display: flex; flex-direction: column; align-items: center; gap: 10px; padding-top: 15px; }
.vi { width: 25px; height: 25px; flex: none; }
.t2d { font: 700 10px "Liberation Sans", sans-serif; fill: #3f8fef; }
.vcar { width: 0; height: 0; flex: none; border-left: 4px solid transparent; border-right: 4px solid transparent; border-top: 5px solid #56657e; }
.vsep { width: 28px; height: 1px; background: #888; flex: none; }

/* right */
.right { flex: 1; margin-top: 1px; margin-right: -60px; display: flex; flex-direction: column; background: #fff; border-left: 1px solid #d0d0d0; border-bottom: 1px solid #d8d8d8; }
.rsub { height: 27px; flex: none; background: #f2f2f2; border-bottom: 1px solid #e0e0e0; line-height: 26px; padding-left: 11px; color: #8a8a8a; font-size: 15px; font-weight: 700; }
.rtabs { height: 38px; flex: none; display: flex; align-items: flex-end; gap: 4px; padding-left: 4px; border-bottom: 1px solid #e0e0e0; font-size: 15px; }
.rtab { width: 76px; height: 28px; line-height: 26px; text-align: center; background: #e2e2e2; border-radius: 4px 4px 0 0; color: #666; }
.rtab.cur { height: 30px; background: #fff; color: #3e8fef; border: 1px solid #dcdcdc; border-bottom: 0; }
.rtable { height: 644.700px; flex: none; margin-left: 4px; overflow: hidden; border-bottom: 1px solid #ddd; border-left: 1px solid #e6e6e6; }
.rrow { display: grid; grid-template-columns: 164px 79px 75px; height: 26.250px; border-bottom: 1px solid #e6e6e6; line-height: 25px; }
.rrow.rh { height: 26px; }
.rn { border-right: 1px solid #e6e6e6; border-left: 0; white-space: nowrap; background: linear-gradient(#e6e6e6, #e6e6e6) 10px 0 / 1px 100% no-repeat; }
.rh .rn { background: none; text-align: center; padding-right: 0; }
.rn.par { display: flex; align-items: center; padding-left: 15px; }
.rn.par .mini { margin-right: 8px; }
.rn.kid { padding-left: 51px; background: linear-gradient(#e6e6e6, #e6e6e6) 10px 0 / 1px 100% no-repeat, linear-gradient(#dcdcdc, #dcdcdc) 22px 0 / 1px 100% no-repeat, linear-gradient(#e6e6e6, #e6e6e6) 22px 50% / 20px 1px no-repeat; }
.rn.kid.end { background: linear-gradient(#e6e6e6, #e6e6e6) 10px 0 / 1px 100% no-repeat, linear-gradient(#dcdcdc, #dcdcdc) 22px 0 / 1px 50% no-repeat, linear-gradient(#e6e6e6, #e6e6e6) 22px 50% / 20px 1px no-repeat; }
.rc { display: flex; align-items: center; justify-content: center; border-right: 1px solid #e6e6e6; white-space: nowrap; }
.rc.hi { background: #7cb8f8; color: #fff; font-weight: 700; }
.rc.focus { outline: 2px solid #808080; outline-offset: -2px; }
.rfoot { padding: 8px 0 0 226px; }
.reset { display: block; width: 140px; height: 32px; line-height: 30px; padding-left: 10px; border: 1px solid #dcdcdc; border-radius: 5px; background: #fff; white-space: nowrap; }

/* bottom */
.bottom { display: flex; gap: 5.500px; height: 10px; padding: 4px 0 0 779px; overflow: hidden; }
.bb { width: 30px; height: 20px; flex: none; background: #fff; border: 1px solid #bdbdbd; border-radius: 4px; }
.bb.w { width: 44px; }
.bb.act { background: #dbe9fb; border-color: #4a90e2; }
.bb.m { margin-left: 3px; margin-right: 3px; }
```
